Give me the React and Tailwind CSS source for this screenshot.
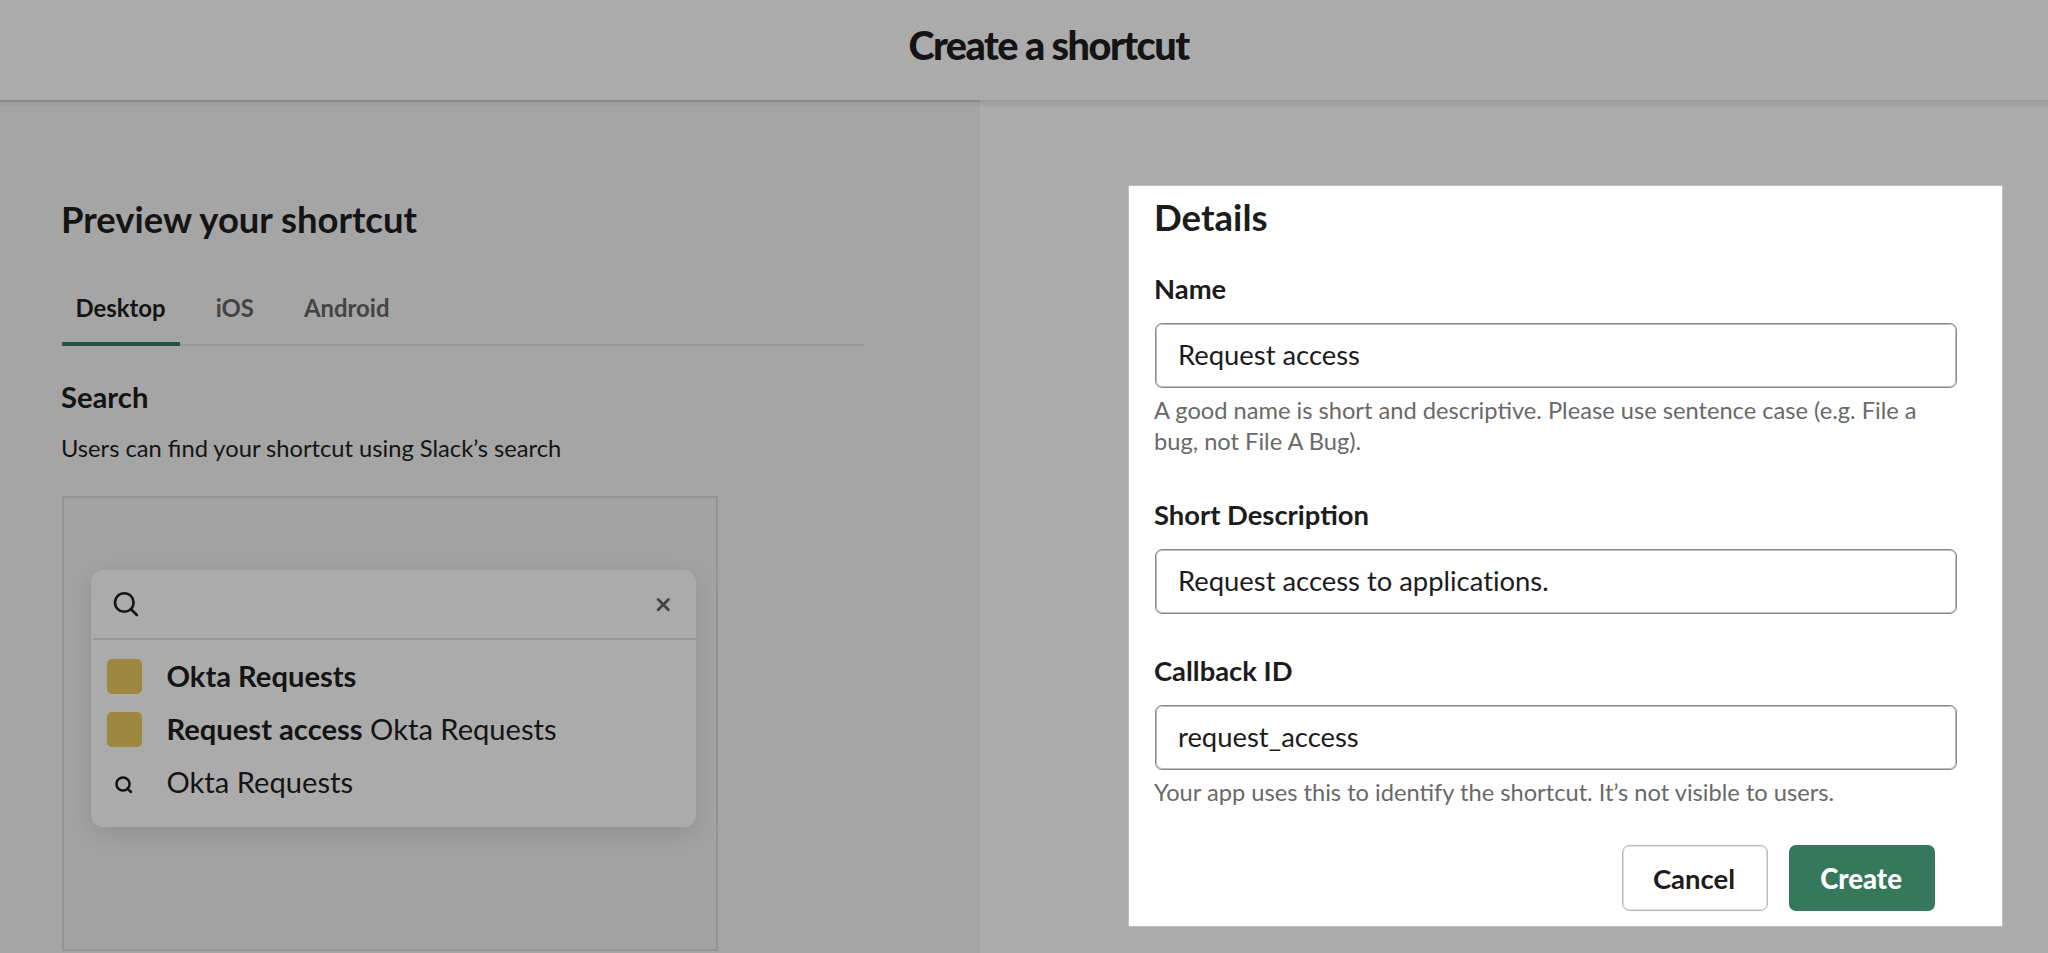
const TABS = [
  { label: 'Desktop', active: true },
  { label: 'iOS' },
  { label: 'Android' },
]

function SearchGlyph() {
  return (
    <svg width="26" height="26" viewBox="0 0 26 26" fill="none" stroke="#141414" strokeWidth="2.6" strokeLinecap="round">
      <circle cx="11.3" cy="11.5" r="9.3" />
      <path d="M18 18.2 L23.9 24" />
    </svg>
  )
}

function SmallSearchGlyph() {
  return (
    <svg width="19" height="19" viewBox="0 0 19 19" fill="none" stroke="#141414" strokeWidth="2.5" strokeLinecap="round">
      <circle cx="9" cy="9" r="6.6" />
      <path d="M13.4 13.6 L17 17" />
    </svg>
  )
}

function CloseGlyph() {
  return (
    <svg width="15" height="15" viewBox="0 0 15 15" fill="none" stroke="#444444" strokeWidth="2.8" strokeLinecap="round">
      <path d="M2.2 2.6 L12.4 12.8 M12.4 2.6 L2.2 12.8" />
    </svg>
  )
}

function Result({ icon, children }) {
  return (
    <li className="flex h-[53px] items-center">
      <span className="flex w-[75.5px] shrink-0 pl-[16px]">{icon}</span>
      <span className="-mt-[2px] whitespace-nowrap leading-[36px]">{children}</span>
    </li>
  )
}

function AppSquare() {
  return <span className="size-[35px] rounded-[5px] bg-[#9e873f]" />
}

function Preview() {
  return (
    <section className="w-[980px] shrink-0 bg-[linear-gradient(#898989_0,#898989_2px,#9b9b9b_2px,#a5a5a5_8px)] pl-[62px] pt-[97px]">
      <h2 className="-ml-[1px] text-[36.4px] font-bold leading-[44px]">Preview your shortcut</h2>
      <div className="mt-[44px] flex h-[61px] w-[802px] shadow-[inset_0_-2px_0_#999999]">
        {TABS.map((t) => (
          <div
            key={t.label}
            className={
              t.active
                ? 'mr-[23px] border-b-4 border-[#27523f] pl-[13.5px] pr-[14px] pt-[8px] text-[23.9px] font-bold leading-[30px] text-[#141414]'
                : 'mr-[24px] px-[13px] pt-[8px] text-[23.9px] font-bold leading-[30px] text-[#444444]'
            }
          >
            {t.label}
          </div>
        ))}
      </div>
      <h3 className="-ml-[1px] mt-[33px] text-[29.2px] font-bold leading-[36px]">Search</h3>
      <p className="-ml-[1px] mt-[18px] text-[23.7px] leading-[30px]">Users can find your shortcut using Slack’s search</p>
      <div className="mt-[33px] flex h-[455px] w-[656px] flex-col border-2 border-[#949494] bg-[#a3a3a3] pl-[27px] pt-[72px]">
        <div className="h-[257px] w-[605px] rounded-[12px] bg-[#ababab] shadow-[0_7px_26px_rgba(0,0,0,0.12)]">
          <div className="ml-[2px] flex h-[70px] items-center justify-between border-b-2 border-[#969696] pl-[20px] pr-[25px]">
            <SearchGlyph />
            <CloseGlyph />
          </div>
          <ul className="pt-[10px] text-[29.15px]">
            <Result icon={<AppSquare />}><b>Okta Requests</b></Result>
            <Result icon={<AppSquare />}><b>Request access</b> Okta Requests</Result>
            <Result icon={<span className="pl-[7px] pt-[4px]"><SmallSearchGlyph /></span>}>Okta Requests</Result>
          </ul>
        </div>
      </div>
    </section>
  )
}

function Field({ label, value, hint }) {
  return (
    <label className="flex flex-col">
      <span className="-ml-[1px] text-[27.4px] font-bold leading-[32px]">{label}</span>
      <input
        defaultValue={value}
        className="mt-[18px] h-[65px] w-[802px] rounded-[7px] border border-[#868686] bg-white pb-[3px] pl-[22px] text-[27.4px] shadow-[inset_0_0_0_1px_#c0c0c0] outline-none [font-variant-ligatures:none]"
      />
      {hint && <span className="-ml-[1px] mt-[7px] w-[802px] text-[23.66px] leading-[31px] text-[#696969]">{hint}</span>}
    </label>
  )
}

function Details() {
  return (
    <form className="ml-[149px] mt-[86px] flex h-[740px] w-[873px] flex-col bg-white pl-[26px] pt-[9px] text-[#1d1c1d] shadow-[0_0_0_1px_#bcbcbc]">
      <h2 className="-ml-[1px] text-[36.6px] font-bold leading-[44px]">Details</h2>
      <div className="mt-[34px] flex flex-col">
        <Field label="Name" value="Request access" hint="A good name is short and descriptive. Please use sentence case (e.g. File a bug, not File A Bug)." />
        <div className="h-[42px]" />
        <Field label="Short Description" value="Request access to applications." />
        <div className="h-[41px]" />
        <Field label="Callback ID" value="request_access" hint="Your app uses this to identify the shortcut. It’s not visible to users." />
      </div>
      <div className="mt-[37px] flex gap-[21px] pl-[467px] text-[27.5px]">
        <button type="button" className="h-[66px] w-[146px] rounded-[7px] border border-[#bbbbbb] pr-[2px] pt-[2px] font-bold shadow-[inset_0_0_0_1px_#dddddd]">Cancel</button>
        <button type="button" className="h-[66px] w-[146px] rounded-[7px] bg-[#35785b] pr-[2px] pt-[2px] font-black text-white">Create</button>
      </div>
    </form>
  )
}

export default function App() {
  return (
    <div className="flex h-[953px] w-[2048px] flex-col overflow-hidden bg-[#ababab] font-['Lato',sans-serif] text-[#141414]">
      <header className="h-[100px] shrink-0 pl-[49px] pt-[25px] text-center">
        <h1 className="text-[39.6px] font-black leading-[40px] tracking-[-1.5px]">Create a shortcut</h1>
      </header>
      <main className="flex min-h-0 flex-1">
        <Preview />
        <section className="flex-1 bg-[linear-gradient(#999999_0,#ababab_8px)]">
          <Details />
        </section>
      </main>
    </div>
  )
}
